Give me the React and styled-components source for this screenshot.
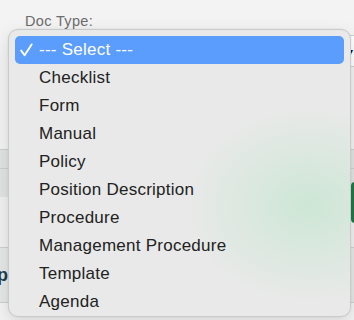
import React from "react";
import styled, { createGlobalStyle } from "styled-components";

const Global = createGlobalStyle`
  html, body { margin: 0; padding: 0; }
  body {
    background: #f3f3f3;
    font-family: "Liberation Sans", Arial, sans-serif;
    width: 354px;
    height: 320px;
    overflow: hidden;
  }
`;

const Page = styled.div`
  position: relative;
  width: 354px;
  height: 320px;
  overflow: hidden;
  display: flex;
  flex-direction: column;
`;

const Label = styled.div`
  padding: 13px 0 0 25px;
  height: 16px;
  font-size: 14.5px;
  letter-spacing: 0.35px;
  line-height: 16px;
  color: #6c6c6c;
`;

const Field = styled.div`
  margin: 6px -20px 0 10px;
  height: 30px;
  border: 1px solid #cfcfcf;
  border-radius: 6px;
  background: #ffffff;
  display: flex;
  align-items: center;
  justify-content: flex-end;
  padding-right: 20px;
  font-size: 10px;
  color: #111;
`;

const Band = styled.div`
  flex: none;
  height: ${(p) => p.$h}px;
  background: ${(p) => p.$bg || "transparent"};
  border-bottom: ${(p) => (p.$line ? "1px solid #cdd0cf" : "none")};
  display: flex;
  justify-content: space-between;
  align-items: ${(p) => p.$align || "center"};
`;

const Clip = styled.div`
  width: 8px;
  overflow: hidden;
  display: flex;
  justify-content: flex-end;
  font-size: 18px;
  font-weight: bold;
  color: #1f3f4a;
  white-space: nowrap;
`;

const GreenButton = styled.div`
  width: 60px;
  height: 41px;
  margin: 13px -57px 0 0;
  background: #1f7a46;
  border-radius: 4px;
`;

const Menu = styled.ul`
  position: absolute;
  left: 8px;
  top: 29px;
  width: 341px;
  height: 280px;
  margin: 0;
  padding: 6px 0 0 0;
  list-style: none;
  border: 1px solid #c9cbca;
  border-radius: 10px;
  background:
    radial-gradient(ellipse 120px 95px at 300px 175px, rgba(200, 230, 210, 0.85), rgba(200, 230, 210, 0) 100%),
    #e8e9e8;
  box-shadow: 0 6px 18px rgba(0, 0, 0, 0.12), 0 0 2px rgba(0, 0, 0, 0.08);
  overflow: hidden;
`;

const Item = styled.li`
  height: 28px;
  margin: 0 6px;
  display: flex;
  align-items: center;
  border-radius: 5px;
  background: ${(p) => (p.$active ? "#5b9dfc" : "transparent")};
  color: ${(p) => (p.$active ? "#ffffff" : "#222222")};
  font-size: 17px;
  letter-spacing: 0.25px;
  white-space: nowrap;
`;

const CheckSlot = styled.span`
  flex: none;
  width: 19px;
  padding-left: 5px;
  display: flex;
  align-items: center;
`;

const Check = () => (
  <svg width="13" height="14" viewBox="0 0 13 14">
    <path d="M1.2 7.6 L4.6 12.2 L11.6 1.4" fill="none" stroke="#ffffff" strokeWidth="1.9" strokeLinecap="round" strokeLinejoin="round" />
  </svg>
);

const options = [
  "--- Select ---",
  "Checklist",
  "Form",
  "Manual",
  "Policy",
  "Position Description",
  "Procedure",
  "Management Procedure",
  "Template",
  "Agenda",
];

export default function App() {
  return (
    <>
      <Global />
      <Page>
        <Label>Doc Type:</Label>
        <Field>▾</Field>
        <Band $h={82} $line />
        <Band $h={18} $bg="#e2e4e3" $line />
        <Band $h={78} $bg="linear-gradient(#e2e4e3 0 28px, #f1f1f1 28px)" $align="flex-start" $line>
          <span />
          <GreenButton />
        </Band>
        <Band $h={54} $bg="#e6e8e7" $line>
          <Clip>Step</Clip>
        </Band>
        <Menu>
          {options.map((o, i) => (
            <Item key={o} $active={i === 0}>
              <CheckSlot>{i === 0 ? <Check /> : null}</CheckSlot>
              {o}
            </Item>
          ))}
        </Menu>
      </Page>
    </>
  );
}
